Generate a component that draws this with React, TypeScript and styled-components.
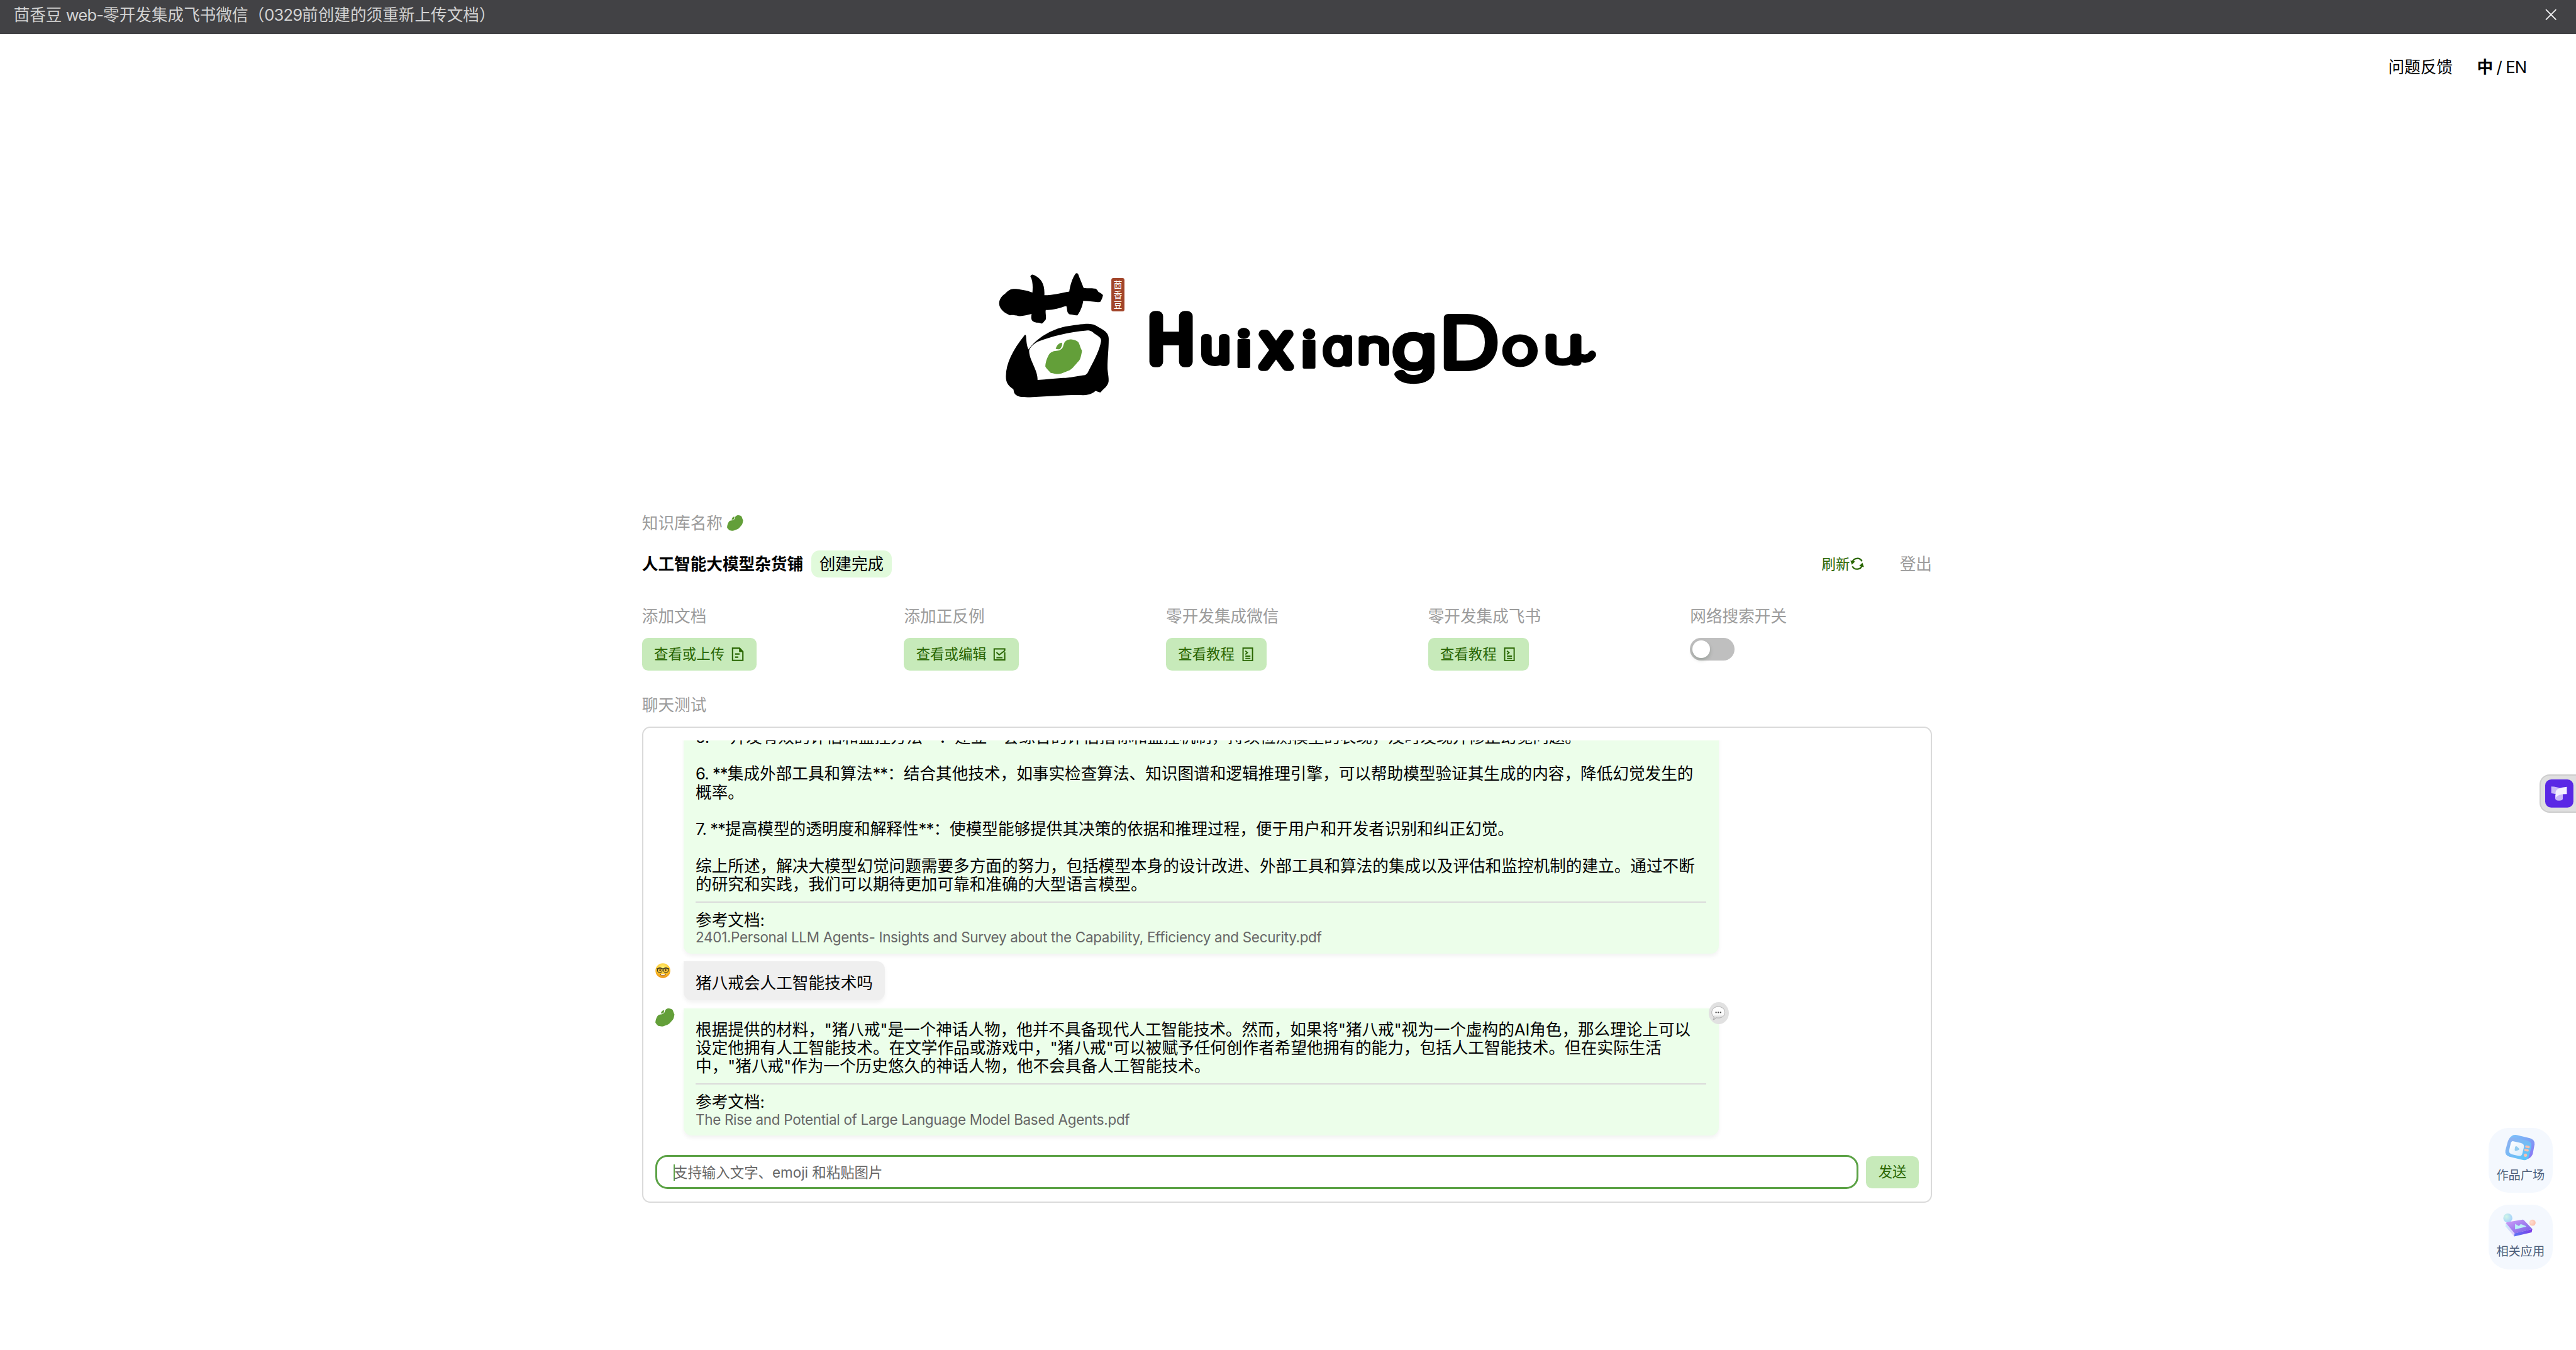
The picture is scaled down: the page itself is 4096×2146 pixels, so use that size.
import React from 'react';
import styled, { createGlobalStyle } from 'styled-components';

const K = 4096 / 5112;
const u = (n: number) => `${(n * K).toFixed(3)}px`;

const GlobalStyle = createGlobalStyle`
  html, body { margin: 0; padding: 0; background: #fff; }
  body {
    font-family: Inter, "Noto Sans CJK SC", sans-serif;
    color: #000;
    overflow: hidden;
  }
  * { box-sizing: border-box; }
`;

const Page = styled.div`
  position: relative;
  display: flex;
  flex-direction: column;
  width: 4096px;
  height: 2146px;
  overflow: hidden;
  background: #fff;
`;

const TitleBar = styled.header`
  display: flex;
  align-items: flex-start;
  justify-content: space-between;
  flex: none;
  height: ${u(68)};
  padding: ${u(9.5)} ${u(38)} 0 ${u(27)};
  background: #424245;
  color: #d2d2d2;
  font-size: ${u(32)};
  line-height: ${u(40)};
  white-space: nowrap;
`;

const Latin = styled.span`
  letter-spacing: ${u(-1.15)};
`;

const CloseIcon = styled.svg`
  width: ${u(23)};
  height: ${u(23)};
  margin-top: ${u(8)};
`;

const TopNav = styled.nav`
  display: flex;
  align-items: center;
  justify-content: flex-end;
  flex: none;
  gap: ${u(48)};
  height: ${u(128)};
  padding: ${u(2)} ${u(98.5)} 0 0;
  font-size: ${u(32)};
  line-height: ${u(40)};
  white-space: nowrap;
`;

const Lang = styled.span`
  letter-spacing: ${u(-1.1)};
  b { font-weight: 600; }
`;

const Logo = styled.svg`
  flex: none;
  display: block;
  width: ${u(1240)};
  height: ${u(290)};
  margin: ${u(324)} 0 0 ${u(1960)};
`;

const Main = styled.main`
  display: flex;
  flex-direction: column;
  width: ${u(2560)};
  margin: ${u(208)} 0 0 ${u(1274)};
`;

const Label = styled.div`
  display: flex;
  align-items: center;
  gap: ${u(9)};
  height: ${u(40)};
  font-size: ${u(32)};
  line-height: ${u(40)};
  color: #9b9b9b;
  white-space: nowrap;
`;

const LabelText = styled.span`
  padding-top: ${u(2)};
`;

const ChatLabel = styled(Label)`
  margin-top: ${u(48)};
`;

const TitleRow = styled.div`
  display: flex;
  align-items: center;
  height: ${u(54)};
  margin-top: ${u(34)};
  font-size: ${u(32)};
  line-height: ${u(54)};
  white-space: nowrap;
`;

const Name = styled.span`
  font-weight: 600;
`;

const Tag = styled.span`
  margin-left: ${u(16)};
  padding: 0 ${u(16)};
  border-radius: ${u(16)};
  background: #e1fadb;
`;

const Refresh = styled.span`
  display: flex;
  align-items: center;
  margin-left: auto;
  font-size: ${u(28)};
  color: #286500;
`;

const Logout = styled.span`
  margin: 0 0 0 ${u(69)};
  color: #9b9b9b;
`;

const Features = styled.section`
  display: grid;
  grid-template-columns: repeat(5, ${u(520)});
  margin-top: ${u(56)};
`;

const Feature = styled.div`
  display: flex;
  flex-direction: column;
  align-items: flex-start;
  gap: ${u(24)};
`;

const Button = styled.button`
  display: flex;
  align-items: center;
  gap: ${u(12)};
  height: ${u(64)};
  padding: 0 ${u(24)};
  border: 0;
  border-radius: ${u(12)};
  background: #c7eaba;
  color: #286500;
  font: inherit;
  font-size: ${u(28)};
  line-height: ${u(40)};
  white-space: nowrap;
`;

const Glyph = styled.svg<{ $w: number; $h?: number }>`
  flex: none;
  display: block;
  width: ${(p) => u(p.$w)};
  height: ${(p) => u(p.$h ?? p.$w)};
  overflow: visible;
`;

const Toggle = styled.span`
  display: flex;
  width: ${u(88)};
  height: ${u(44)};
  padding: ${u(4)};
  border-radius: ${u(22)};
  background: #bfbfbf;
`;

const Knob = styled.i`
  width: ${u(36)};
  height: ${u(36)};
  border-radius: 50%;
  background: #fff;
  box-shadow: 0 ${u(4)} ${u(8)} rgba(0, 35, 11, 0.2);
`;

const ChatPanel = styled.section`
  display: flex;
  flex-direction: column;
  height: ${u(944)};
  margin-top: ${u(24)};
  padding: ${u(24)};
  border: 2px solid #dadada;
  border-radius: ${u(16)};
`;

const Messages = styled.div`
  display: flex;
  flex: 1;
  flex-direction: column;
  justify-content: flex-end;
  gap: ${u(16)};
  min-height: 0;
  padding-bottom: ${u(38.7)};
  overflow: hidden;
`;

const MessageRow = styled.div`
  display: grid;
  flex: none;
  grid-template-columns: ${u(56)} max-content;
  align-items: start;
`;

const Avatar = styled.div<{ $top: number }>`
  padding-top: ${(p) => u(p.$top)};
`;

const Bubble = styled.div<{ $user?: boolean }>`
  position: relative;
  width: ${(p) => (p.$user ? u(400) : u(2054))};
  padding: ${u(24)} ${u(24)} ${u(16)};
  border-radius: 0 ${u(16)} ${u(16)} ${u(16)};
  background: ${(p) => (p.$user ? '#efefef' : '#ecfeea')};
  box-shadow: 0 ${u(4)} ${u(8)} rgba(0, 0, 0, 0.05);
`;

const Line = styled.p<{ $tight?: number }>`
  height: ${u(36.55)};
  margin: 0;
  font-size: ${u(32)};
  line-height: ${u(36.55)};
  letter-spacing: ${(p) => u(p.$tight ?? 0)};
  white-space: nowrap;
`;

const Rule = styled.hr`
  height: 2px;
  margin: ${u(16)} 0;
  border: 0;
  background: #dadada;
`;

const FileName = styled.p`
  margin: 0;
  font-size: ${u(28)};
  line-height: ${u(32)};
  letter-spacing: ${u(-0.375)};
  color: #666;
  white-space: nowrap;
`;

const Feedback = styled.span`
  position: absolute;
  top: ${u(-12)};
  right: ${u(-20)};
  display: flex;
  align-items: center;
  justify-content: center;
  width: ${u(40)};
  height: ${u(44)};
  border-radius: 50%;
  background: #e1e1e1;
`;

const InputRow = styled.div`
  display: flex;
  align-items: center;
  flex: none;
  gap: ${u(16)};
  height: ${u(68)};
`;

const Field = styled.div`
  display: flex;
  align-items: center;
  flex: 1;
  height: ${u(68)};
  padding: ${u(2)} 0 0 ${u(32)};
  border: 3px solid #5ba245;
  border-radius: ${u(24)};
  color: #666;
  font-size: ${u(28)};
  line-height: ${u(40)};
`;

const Caret = styled.i`
  width: 2px;
  height: ${u(33)};
  margin-right: ${u(-2)};
  background: #5ba245;
`;

const SideTab = styled.aside`
  position: absolute;
  top: ${u(1536)};
  right: 0;
  width: ${u(72)};
  height: ${u(76)};
  padding: ${u(8)};
  border: 2px solid #cdcdcd;
  border-right: 0;
  border-radius: ${u(20)} 0 0 ${u(20)};
  background: #dfdfdf;
`;

const Shortcuts = styled.aside`
  position: absolute;
  top: ${u(2238)};
  left: ${u(4938)};
  display: flex;
  flex-direction: column;
  gap: ${u(24)};
`;

const Shortcut = styled.div`
  display: flex;
  flex-direction: column;
  align-items: center;
  gap: ${u(11)};
  width: ${u(128)};
  height: ${u(128)};
  padding-top: ${u(9)};
  border-radius: ${u(40)};
  background: #f4f8fe;
  color: #4e5f7b;
  font-size: ${u(24)};
  line-height: ${u(32)};
  white-space: nowrap;
`;

const BEAN_BODY =
  'M375,476 C385,462 395,459 407,459 C420,460 434,465 441,474 C449,486 450,505 460,526 C457,550 453,575 446,585 C430,605 415,632 400,642 C382,650 365,662 345,665 C332,665 320,660 308,658 C300,648 288,635 282,622 C281,600 290,565 303,543 C315,528 330,527 345,525 C362,520 368,505 370,492 Z';
const BEAN_LEAF = 'M332,515 C336,498 345,481 361,478 C367,482 362,505 352,517 C345,519 338,518 332,515 Z';

const BeanShape = () => (
  <g fill="#639f39">
    <path d={BEAN_BODY} />
    <path d={BEAN_LEAF} />
  </g>
);

const Bean = ({ w, h }: { w: number; h: number }) => (
  <Glyph $w={w} $h={h} viewBox="0 0 73.1 68.7" preserveAspectRatio="none">
    <g transform="scale(0.40816 0.33333) translate(-281 -459)">
      <BeanShape />
    </g>
  </Glyph>
);

type Letter = { c: string; x: number; y: number; size: number; w: number; s: number; weight?: number };

const LETTERS: Letter[] = [
  { c: 'H', x: 2279.6, y: 717, size: 124, w: 90, s: 22 },
  { c: 'u', x: 2383.6, y: 719, size: 88, w: 57.3, s: 15 },
  { c: 'i', x: 2454, y: 727, size: 95, w: 30, s: 5, weight: 900 },
  { c: 'x', x: 2502, y: 727, size: 119, w: 61.7, s: 17 },
  { c: 'i', x: 2583.5, y: 729, size: 95, w: 30, s: 5, weight: 900 },
  { c: 'a', x: 2625.8, y: 720.5, size: 93, w: 60.5, s: 12 },
  { c: 'n', x: 2694.3, y: 720, size: 90, w: 66, s: 12 },
  { c: 'g', x: 2763.4, y: 729.5, size: 117, w: 89, s: 13 },
  { c: 'D', x: 2857.6, y: 728.5, size: 136, w: 117, s: 15 },
  { c: 'o', x: 2981.5, y: 721, size: 96, w: 70.8, s: 11 },
  { c: 'u', x: 3063.4, y: 720, size: 95, w: 80, s: 11 },
];

const BrandLogo = () => (
  <Logo viewBox="1960 520 1240 290">
    <g transform="translate(1960 520) scale(0.40816 0.33333)">
      <path d="M57,243 C58,215 75,195 85,188 C95,175 105,166 112,162 C125,156 145,158 160,162 C185,166 205,173 219,180 C221,150 222,110 209,84 C212,70 222,70 230,78 C262,98 280,130 277,196 C320,195 360,182 398,174 C402,140 412,95 428,68 C434,62 440,66 442,72 C450,100 460,125 468,153 C490,156 505,154 520,156 C530,155 535,165 540,176 C550,182 558,188 562,196 C560,210 556,220 552,230 C548,238 540,238 530,236 C510,232 490,230 466,229 C462,260 455,285 438,315 C425,318 415,310 400,310 C383,298 390,275 384,261 C365,262 345,282 284,284 C280,300 290,335 281,345 C275,350 270,366 262,364 C255,362 250,358 243,359 C215,356 210,340 215,307 C190,315 170,322 150,319 C135,315 120,312 110,315 C80,300 57,275 57,243Z" />
      <path
        fillRule="evenodd"
        d="M178,438 C183,428 187,430 188,440 C190,465 190,495 200,519 C240,450 310,400 380,382 C420,375 460,366 490,366 C520,366 530,380 550,392 C575,410 590,425 590,455 C590,520 584,570 584,630 C584,650 592,690 589,712 C582,745 560,755 552,772 C545,778 535,768 527,765 C515,775 505,790 465,791 C400,788 300,798 220,802 C180,804 150,802 140,790 C125,775 130,765 126,755 C100,735 90,715 90,680 C90,600 125,520 178,438 Z M203,522 C201,580 246,640 244,700 C290,696 330,692 368,688 C400,688 440,676 475,671 C480,668 485,662 488,656 C520,580 545,525 553,468 C553,450 545,443 520,424 C510,412 500,402 480,406 C400,415 310,440 250,470 C230,480 212,500 203,522 Z"
      />
      <BeanShape />
    </g>
    <rect x="2206" y="551.3" width="26" height="66" rx="4" fill="#a2452a" />
    <text fill="#fff" fontSize="17" fontWeight="400" textAnchor="middle">
      <tspan x="2219" y="571">茴</tspan>
      <tspan x="2219" y="591">香</tspan>
      <tspan x="2219" y="611">豆</tspan>
    </text>
    <text
      fontFamily="Inter, sans-serif"
      fontWeight="200"
      stroke="#000"
      strokeLinejoin="round"
      strokeLinecap="round"
      style={{ fontFeatureSettings: '"cv11"' }}
    >
      {LETTERS.map((l, i) => (
        <tspan
          key={i}
          x={l.x}
          y={l.y}
          fontSize={l.size}
          fontWeight={l.weight}
          strokeWidth={l.s}
          textLength={l.w}
          lengthAdjust="spacingAndGlyphs"
        >
          {l.c}
        </tspan>
      ))}
    </text>
    <path d="M3133 708Q3152 716 3160 703" fill="none" stroke="#000" strokeWidth="16" strokeLinecap="round" />
  </Logo>
);

const DocIcon = () => (
  <Glyph $w={28} viewBox="0 0 28 28" fill="none" stroke="#286500" strokeWidth="2.6">
    <path d="M3.5 1.7H17.5L24 8.5V26H3.5Z M8.5 13.3H17.5 M8.5 19.5H15" />
    <path d="M16.5 2V9.5H24Z" fill="#286500" stroke="none" />
  </Glyph>
);

const EditIcon = () => (
  <Glyph $w={28} viewBox="0 0 28 28" fill="none" stroke="#286500" strokeWidth="2.5">
    <path d="M24.5 10V25H3.5V3H24.5V7 M8 10L13.5 15L24.5 6.5 M8 20.5H20" />
  </Glyph>
);

const BookIcon = () => (
  <Glyph $w={28} viewBox="0 0 28 28" fill="none" stroke="#286500" strokeWidth="2.4">
    <path d="M4.4 1.6H23.2V26.4H4.4Z M9 7L13 10.5L9 14 M9 17.5H19 M9 22H19" />
  </Glyph>
);

const RefreshIcon = () => (
  <Glyph $w={30} $h={28} viewBox="0 0 30 28" fill="none" stroke="#286500" strokeWidth="2.8">
    <path d="M5 11.5A10.5 10.5 0 0 1 24.5 9 M25 16.5A10.5 10.5 0 0 1 5.5 19" />
    <path d="M1.5 7.5L11 9.5L4.5 16Z M28.5 20.5L19 18.5L25.5 12Z" fill="#286500" stroke="none" />
  </Glyph>
);

const NerdFace = () => (
  <Glyph $w={30} viewBox="0 0 30 30">
    <defs>
      <radialGradient id="face" cx="0.5" cy="0.3" r="0.75">
        <stop offset="0" stopColor="#fff27a" />
        <stop offset="0.6" stopColor="#fdc52c" />
        <stop offset="1" stopColor="#e8830c" />
      </radialGradient>
    </defs>
    <circle cx="15" cy="15" r="14.7" fill="url(#face)" />
    <path d="M8.5 20.5Q15 23 21.5 20.5Q20 25.5 15 25.5Q10 25.5 8.5 20.5Z" fill="#a0601a" />
    <path d="M11.5 21.5Q15 22.3 18.5 21.5V24H11.5Z" fill="#fff" />
    <g fill="#fbc93a" stroke="#3a3420" strokeWidth="1.5">
      <circle cx="9" cy="14" r="4.8" />
      <circle cx="21" cy="14" r="4.8" />
    </g>
    <path d="M2.5 11H27.5" stroke="#3a3420" strokeWidth="1.4" />
    <ellipse cx="9.5" cy="14" rx="1.4" ry="2.1" fill="#5a340c" />
    <ellipse cx="20.5" cy="14" rx="1.4" ry="2.1" fill="#5a340c" />
  </Glyph>
);

const SpeechIcon = () => (
  <Glyph $w={28} $h={28} viewBox="0 0 28 28">
    <defs>
      <linearGradient id="speech" x1="0" y1="0" x2="0" y2="1">
        <stop offset="0" stopColor="#fff" />
        <stop offset="0.6" stopColor="#fafafa" />
        <stop offset="1" stopColor="#bdbdbd" />
      </linearGradient>
    </defs>
    <path
      d="M14 1.5C21.5 1.5 27 6.5 27 13C27 19.5 21.5 24 14 24C12.5 24 11 23.8 9.8 23.5C8.5 25.5 6.5 27 3.8 27.5C5 25.5 5.5 23.5 5 21.5C2.5 19.5 1 16.5 1 13C1 6.5 6.5 1.5 14 1.5Z"
      fill="url(#speech)"
      stroke="#a9a9a9"
      strokeWidth="1.1"
    />
    <g fill="#444">
      <circle cx="9.5" cy="13" r="1.4" />
      <circle cx="14" cy="13" r="1.4" />
      <circle cx="18.5" cy="13" r="1.4" />
    </g>
  </Glyph>
);

const TabIcon = () => (
  <Glyph $w={56} viewBox="0 0 168 168">
    <rect width="168" height="168" rx="36" fill="#5a28e5" />
    <path d="M36 42Q60 42 86 51L62 87Q48 83 36 82Z" fill="#c9b8f6" />
    <path d="M60 92L105 84V115Q104 126 83 126Q62 126 60 115Z" fill="#c9b8f6" />
    <path d="M129 44V87Q76 86 62 110V76Q62 50 129 44Z" fill="#f5f1ff" />
  </Glyph>
);

const TvIcon = () => (
  <Glyph $w={64} $h={58} viewBox="210 110 192 174">
    <defs>
      <linearGradient id="tvFront" x1="0" y1="0" x2="1" y2="1">
        <stop offset="0" stopColor="#94aef0" />
        <stop offset="1" stopColor="#55c8fa" />
      </linearGradient>
      <linearGradient id="tvSide" x1="0" y1="0" x2="1" y2="1">
        <stop offset="0" stopColor="#7cc6fb" />
        <stop offset="0.5" stopColor="#7ea4f5" />
        <stop offset="1" stopColor="#8d6cf4" />
      </linearGradient>
      <linearGradient id="tvScreen" x1="0" y1="0" x2="1" y2="1">
        <stop offset="0" stopColor="#fff" />
        <stop offset="1" stopColor="#d9ecfc" />
      </linearGradient>
    </defs>
    <path d="M240 146Q258 120 284 126L362 145Q392 153 390 182L380 236Q374 258 350 268Z" fill="url(#tvSide)" />
    <path d="M264 141L345 160Q378 168 371 196L356 255Q349 279 322 275L240 255Q211 246 217 216L231 164Q239 138 264 141Z" fill="url(#tvFront)" />
    <path d="M264 163L310 174Q329 179 327 197L317 238Q312 253 296 250L256 241Q237 236 239 218L248 176Q252 161 264 163Z" fill="url(#tvScreen)" />
    <path d="M274 198Q276 190 284 193L298 206Q302 211 296 215L280 221Q272 223 272 214Z" fill="#93cdf0" />
    <g fill="#f6bfae">
      <rect x="334" y="189" width="28" height="14" rx="7" transform="rotate(10 348 196)" />
      <rect x="328" y="209" width="28" height="14" rx="7" transform="rotate(10 342 216)" />
      <circle cx="336" cy="246" r="10" />
    </g>
  </Glyph>
);

const AppsIcon = () => (
  <Glyph $w={64} $h={58} viewBox="210 567 192 174">
    <defs>
      <linearGradient id="slabTop" x1="0" y1="0" x2="1" y2="1">
        <stop offset="0" stopColor="#d3a1f8" />
        <stop offset="1" stopColor="#6f5be6" />
      </linearGradient>
      <linearGradient id="slabSide" x1="0" y1="0" x2="1" y2="0">
        <stop offset="0" stopColor="#5b74f5" />
        <stop offset="1" stopColor="#7f3de8" />
      </linearGradient>
      <linearGradient id="slabLeft" x1="0" y1="0" x2="1" y2="1">
        <stop offset="0" stopColor="#c4f0fb" />
        <stop offset="1" stopColor="#e4c4fb" />
      </linearGradient>
      <radialGradient id="ball" cx="0.35" cy="0.35" r="0.75">
        <stop offset="0" stopColor="#d2f7e6" />
        <stop offset="1" stopColor="#a0cdfd" />
      </radialGradient>
      <radialGradient id="peach" cx="0.35" cy="0.4" r="0.75">
        <stop offset="0" stopColor="#ffdccf" />
        <stop offset="1" stopColor="#fbbda8" />
      </radialGradient>
    </defs>
    <path d="M219 650L272 712L269 730L217 670Z" fill="url(#slabLeft)" />
    <circle cx="231" cy="620" r="27" fill="url(#ball)" />
    <circle cx="378" cy="648" r="18.5" fill="url(#peach)" />
    <path d="M271 711L377 686L373 706L269 730Z" fill="url(#slabSide)" />
    <path d="M219 650Q222 646 230 645L318 630Q324 630 328 634L377 686L272 712Z" fill="url(#slabTop)" />
    <path d="M274 655L297 668L308 656L339 668V672L274 688Z" fill="#b9f0f7" />
  </Glyph>
);

const features = [
  { label: '添加文档', action: '查看或上传', icon: <DocIcon /> },
  { label: '添加正反例', action: '查看或编辑', icon: <EditIcon /> },
  { label: '零开发集成微信', action: '查看教程', icon: <BookIcon /> },
  { label: '零开发集成飞书', action: '查看教程', icon: <BookIcon /> },
];

export default function App() {
  return (
    <>
      <GlobalStyle />
      <Page>
        <TitleBar>
          <span>
            茴香豆<Latin> web-</Latin>零开发集成飞书微信（<Latin>0329</Latin>前创建的须重新上传文档）
          </span>
          <CloseIcon viewBox="0 0 23 23" stroke="#f0f0f2" strokeWidth="2.4" strokeLinecap="round">
            <path d="M2 2L21 21M21 2L2 21" />
          </CloseIcon>
        </TitleBar>
        <TopNav>
          <span>问题反馈</span>
          <Lang>
            <b>中</b> / EN
          </Lang>
        </TopNav>
        <BrandLogo />
        <Main>
          <Label>
            <LabelText>知识库名称</LabelText>
            <Bean w={32} h={31} />
          </Label>
          <TitleRow>
            <Name>人工智能大模型杂货铺</Name>
            <Tag>创建完成</Tag>
            <Refresh>
              刷新
              <RefreshIcon />
            </Refresh>
            <Logout>登出</Logout>
          </TitleRow>
          <Features>
            {features.map((f) => (
              <Feature key={f.label}>
                <Label>
                  <LabelText>{f.label}</LabelText>
                </Label>
                <Button>
                  {f.action}
                  {f.icon}
                </Button>
              </Feature>
            ))}
            <Feature>
              <Label>
                <LabelText>网络搜索开关</LabelText>
              </Label>
              <Toggle>
                <Knob />
              </Toggle>
            </Feature>
          </Features>
          <ChatLabel>
            <LabelText>聊天测试</LabelText>
          </ChatLabel>
          <ChatPanel>
            <Messages>
              <MessageRow>
                <Avatar $top={0}>
                  <Bean w={38} h={36} />
                </Avatar>
                <Bubble>
                  <Line $tight={-0.12}>5. **开发有效的评估和监控方法**：建立一套综合的评估指标和监控机制，持续检测模型的表现，及时发现并修正幻觉问题。</Line>
                  <Line />
                  <Line>
                    <Latin>6. **</Latin>集成外部工具和算法<Latin>**</Latin>：结合其他技术，如事实检查算法、知识图谱和逻辑推理引擎，可以帮助模型验证其生成的内容，降低幻觉发生的
                  </Line>
                  <Line>概率。</Line>
                  <Line />
                  <Line>
                    <Latin>7. **</Latin>提高模型的透明度和解释性<Latin>**</Latin>：使模型能够提供其决策的依据和推理过程，便于用户和开发者识别和纠正幻觉。
                  </Line>
                  <Line />
                  <Line>综上所述，解决大模型幻觉问题需要多方面的努力，包括模型本身的设计改进、外部工具和算法的集成以及评估和监控机制的建立。通过不断</Line>
                  <Line>的研究和实践，我们可以期待更加可靠和准确的大型语言模型。</Line>
                  <Rule />
                  <Line>参考文档:</Line>
                  <FileName>
                    2401.Personal LLM Agents- Insights and Survey about the Capability, Efficiency and Security.pdf
                  </FileName>
                </Bubble>
              </MessageRow>
              <MessageRow>
                <Avatar $top={3}>
                  <NerdFace />
                </Avatar>
                <Bubble $user>
                  <Line>猪八戒会人工智能技术吗</Line>
                </Bubble>
              </MessageRow>
              <MessageRow>
                <Avatar $top={0}>
                  <Bean w={38} h={36} />
                </Avatar>
                <Bubble>
                  <Line $tight={-0.04}>根据提供的材料，"猪八戒"是一个神话人物，他并不具备现代人工智能技术。然而，如果将"猪八戒"视为一个虚构的AI角色，那么理论上可以</Line>
                  <Line>设定他拥有人工智能技术。在文学作品或游戏中，"猪八戒"可以被赋予任何创作者希望他拥有的能力，包括人工智能技术。但在实际生活</Line>
                  <Line>中，"猪八戒"作为一个历史悠久的神话人物，他不会具备人工智能技术。</Line>
                  <Rule />
                  <Line>参考文档:</Line>
                  <FileName>The Rise and Potential of Large Language Model Based Agents.pdf</FileName>
                  <Feedback>
                    <SpeechIcon />
                  </Feedback>
                </Bubble>
              </MessageRow>
            </Messages>
            <InputRow>
              <Field>
                <Caret />
                支持输入文字、emoji 和粘贴图片
              </Field>
              <Button>发送</Button>
            </InputRow>
          </ChatPanel>
        </Main>
        <SideTab>
          <TabIcon />
        </SideTab>
        <Shortcuts>
          <Shortcut>
            <TvIcon />
            作品广场
          </Shortcut>
          <Shortcut>
            <AppsIcon />
            相关应用
          </Shortcut>
        </Shortcuts>
      </Page>
    </>
  );
}
